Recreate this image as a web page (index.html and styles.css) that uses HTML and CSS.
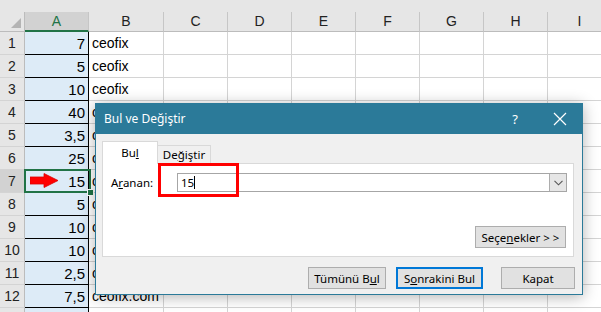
FILE: index.html
```html
<!DOCTYPE html>
<html lang="tr">
<head>
    <meta charset="UTF-8">
    <meta name="viewport" content="width=device-width, initial-scale=1.0">
    <title>Bul ve Değiştir</title>
    <link rel="stylesheet" href="styles.css">
</head>
<body>
    <div class="topbar"></div>
    <div class="sheet" id="sheet">
        <div class="corner">
            <svg width="10" height="10" viewBox="0 0 10 10"><polygon points="10,0 10,10 0,10" fill="#b4b4b4"/></svg>
        </div>
        <div class="colhead sel">A</div>
        <div class="colhead">B</div>
        <div class="colhead">C</div>
        <div class="colhead">D</div>
        <div class="colhead">E</div>
        <div class="colhead">F</div>
        <div class="colhead">G</div>
        <div class="colhead">H</div>
        <div class="colhead">I</div>
        <div class="colhead"></div>
    </div>

    <!-- active cell A7 -->
    <div class="active-cell"><span class="fill-handle"></span></div>
    <svg class="red-arrow" width="30" height="16" viewBox="0 0 30 16">
        <polygon points="0,4 14,4 14,0.5 28,7.5 14,14.5 14,11 0,11" fill="#f00" stroke="#d00" stroke-width="0.8"/>
    </svg>

    <div class="dialog">
        <div class="dlg-title">
            <span class="dlg-name">Bul ve Değiştir</span>
            <span class="dlg-help">?</span>
            <span class="dlg-close">
                <svg width="14" height="14" viewBox="0 0 14 14"><path d="M1 1 L13 13 M13 1 L1 13" stroke="#fff" stroke-width="1.2"/></svg>
            </span>
        </div>
        <div class="dlg-body">
            <div class="tabs">
                <div class="tab active">Bu<u>l</u></div>
                <div class="tab">De<u>ğ</u>iştir</div>
            </div>
            <div class="panel">
                <div class="find-row">
                    <label class="find-label">A<u>r</u>anan:</label>
                    <div class="combo">
                        <span class="combo-text">15<span class="caret"></span></span>
                        <span class="combo-btn">
                            <svg width="9" height="6" viewBox="0 0 9 6"><path d="M0.5 0.8 L4.5 4.8 L8.5 0.8" fill="none" stroke="#555" stroke-width="1.1"/></svg>
                        </span>
                    </div>
                </div>
                <button class="btn options">Seçe<u>n</u>ekler &gt; &gt;</button>
            </div>
        </div>
        <div class="dlg-foot">
            <button class="btn find-all">Tümünü B<u>u</u>l</button>
            <button class="btn find-next default">S<u>o</u>nrakini Bul</button>
            <button class="btn close">Kapat</button>
        </div>
    </div>
    <div class="highlight"></div>

    <script>
        const rows = [
            ['7', 'ceofix'], ['5', 'ceofix'], ['10', 'ceofix'], ['40', 'ceofix'],
            ['3,5', 'ceofix'], ['25', 'ceofix'], ['15', 'ceofix'], ['5', 'ceofix'],
            ['10', 'ceofix'], ['10', 'ceofix'], ['2,5', 'ceofix'], ['7,5', 'ceofix.com'],
            ['', '']
        ];
        const sheet = document.getElementById('sheet');
        rows.forEach((r, i) => {
            // the 13th row only peeks in at the bottom edge, its number is below the fold
            const label = i < 12 ? i + 1 : '';
            let html = `<div class="rowhead${i === 6 ? ' sel' : ''}">${label}</div>`;
            html += `<div class="cell num">${r[0]}</div>`;
            html += `<div class="cell txt">${r[1]}</div>`;
            for (let c = 0; c < 8; c++) html += '<div class="cell"></div>';
            sheet.insertAdjacentHTML('beforeend', html);
        });
    </script>
</body>
</html>
```

FILE: styles.css
```css
body {
    margin: 0;
    width: 601px;
    height: 312px;
    overflow: hidden;
    position: relative;
    background: #fff;
    font-family: "Liberation Sans", Arial, sans-serif;
}
.topbar {
    height: 12px;
    background: #e6e6e6;
}
.sheet {
    display: grid;
    grid-template-columns: 25px 64px 75px repeat(8, 64px);
    grid-template-rows: 20px;
    grid-auto-rows: 23px;
    font-size: 14px;
}
.sheet > div {
    box-sizing: border-box;
    white-space: nowrap;
}
.corner {
    background: #e6e6e6;
    border-right: 1px solid #bcbcbc;
    border-bottom: 1px solid #bcbcbc;
    display: flex;
    align-items: flex-end;
    justify-content: flex-end;
    padding: 0 3px 3px 0;
}
.colhead {
    background: #e6e6e6;
    border-right: 1px solid #c6c6c6;
    border-bottom: 1px solid #bcbcbc;
    color: #222;
    text-align: center;
    line-height: 19px;
}
.colhead.sel {
    background: #d2d2d2;
    border-bottom: 2px solid #217346;
    color: #217346;
}
.rowhead {
    background: #e6e6e6;
    border-right: 1px solid #bcbcbc;
    border-bottom: 1px solid #d4d4d4;
    color: #222;
    text-align: center;
    line-height: 23px;
}
.rowhead.sel {
    background: #d2d2d2;
}
.cell {
    border-right: 1px solid #d4d4d4;
    border-bottom: 1px solid #d4d4d4;
    line-height: 23px;
    color: #000;
}
.cell.num {
    background: #ddebf7;
    border-right: 1px solid #000;
    border-bottom: 1px solid #000;
    text-align: right;
    padding-right: 3px;
    font-size: 15px;
}
.cell.txt {
    padding-left: 3px;
}
.active-cell {
    position: absolute;
    left: 24px;
    top: 169px;
    width: 67px;
    height: 24px;
    box-sizing: border-box;
    border: 2px solid #217346;
}
.fill-handle {
    position: absolute;
    right: -5px;
    bottom: -5px;
    width: 5px;
    height: 5px;
    background: #217346;
    border: 1px solid #fff;
}
.red-arrow {
    position: absolute;
    left: 30px;
    top: 173px;
}

/* dialog */
.dialog {
    position: absolute;
    left: 95px;
    top: 103px;
    width: 488px;
    height: 192px;
    box-sizing: border-box;
    background: #f0f0f0;
    border: 1px solid #2b7a99;
    border-top: none;
    box-shadow: 0 2px 14px rgba(0, 0, 0, 0.3);
    font-family: "Noto Sans", "Open Sans", sans-serif;
    font-size: 11.5px;
    color: #000;
}
.dlg-title {
    height: 31px;
    background: #2b7a99;
    color: #fff;
    display: flex;
    align-items: center;
    padding-left: 9px;
    margin: 0 -1px;
}
.dlg-name {
    font-size: 12px;
}
.dlg-help {
    margin-left: auto;
    font-size: 13px;
    width: 14px;
    text-align: center;
}
.dlg-close {
    display: flex;
    margin: 0 16px 0 31px;
}
.dlg-body {
    padding: 7px 8px 0 6px;
}
.tabs {
    display: flex;
    align-items: flex-end;
    height: 22px;
    position: relative;
    z-index: 1;
}
.tab {
    box-sizing: border-box;
    height: 18px;
    width: 53px;
    border: 1px solid #d9d9d9;
    border-left: none;
    border-bottom: none;
    background: #f0f0f0;
    text-align: center;
    line-height: 17px;
}
.tab.active {
    width: 56px;
    height: 23px;
    margin-bottom: -1px;
    border-left: 1px solid #d9d9d9;
    background: #fff;
    line-height: 21px;
}
.panel {
    box-sizing: border-box;
    height: 94px;
    background: #fff;
    border: 1px solid #d9d9d9;
    padding: 9px 6px 8px 8px;
    display: flex;
    flex-direction: column;
}
.find-row {
    display: flex;
    align-items: center;
}
.find-label {
    width: 66px;
}
.combo {
    box-sizing: border-box;
    width: 390px;
    height: 19px;
    border: 1px solid #a6a6a6;
    display: flex;
    align-items: stretch;
}
.combo-text {
    flex: 1;
    padding-left: 3px;
    line-height: 17px;
}
.caret {
    display: inline-block;
    width: 1px;
    height: 13px;
    background: #000;
    vertical-align: -2px;
}
.combo-btn {
    width: 16px;
    background: #e6e6e6;
    border-left: 1px solid #adadad;
    display: flex;
    align-items: center;
    justify-content: center;
}
.btn {
    box-sizing: border-box;
    height: 22px;
    padding: 0;
    background: #e1e1e1;
    border: 1px solid #adadad;
    font-family: inherit;
    font-size: 11.5px;
    color: #000;
}
.options {
    margin-top: auto;
    align-self: flex-end;
    width: 91px;
    margin-right: 1px;
}
.dlg-foot {
    display: flex;
    justify-content: flex-end;
    padding: 10px 7px 0 0;
}
.find-all {
    width: 78px;
}
.find-next {
    width: 87px;
    margin-left: 10px;
}
.find-next.default {
    border: 2px solid #0078d7;
}
.close {
    width: 74px;
    margin-left: 18px;
}
.highlight {
    position: absolute;
    left: 158px;
    top: 163px;
    width: 81px;
    height: 34px;
    box-sizing: border-box;
    border: 3px solid #f00;
}
```
